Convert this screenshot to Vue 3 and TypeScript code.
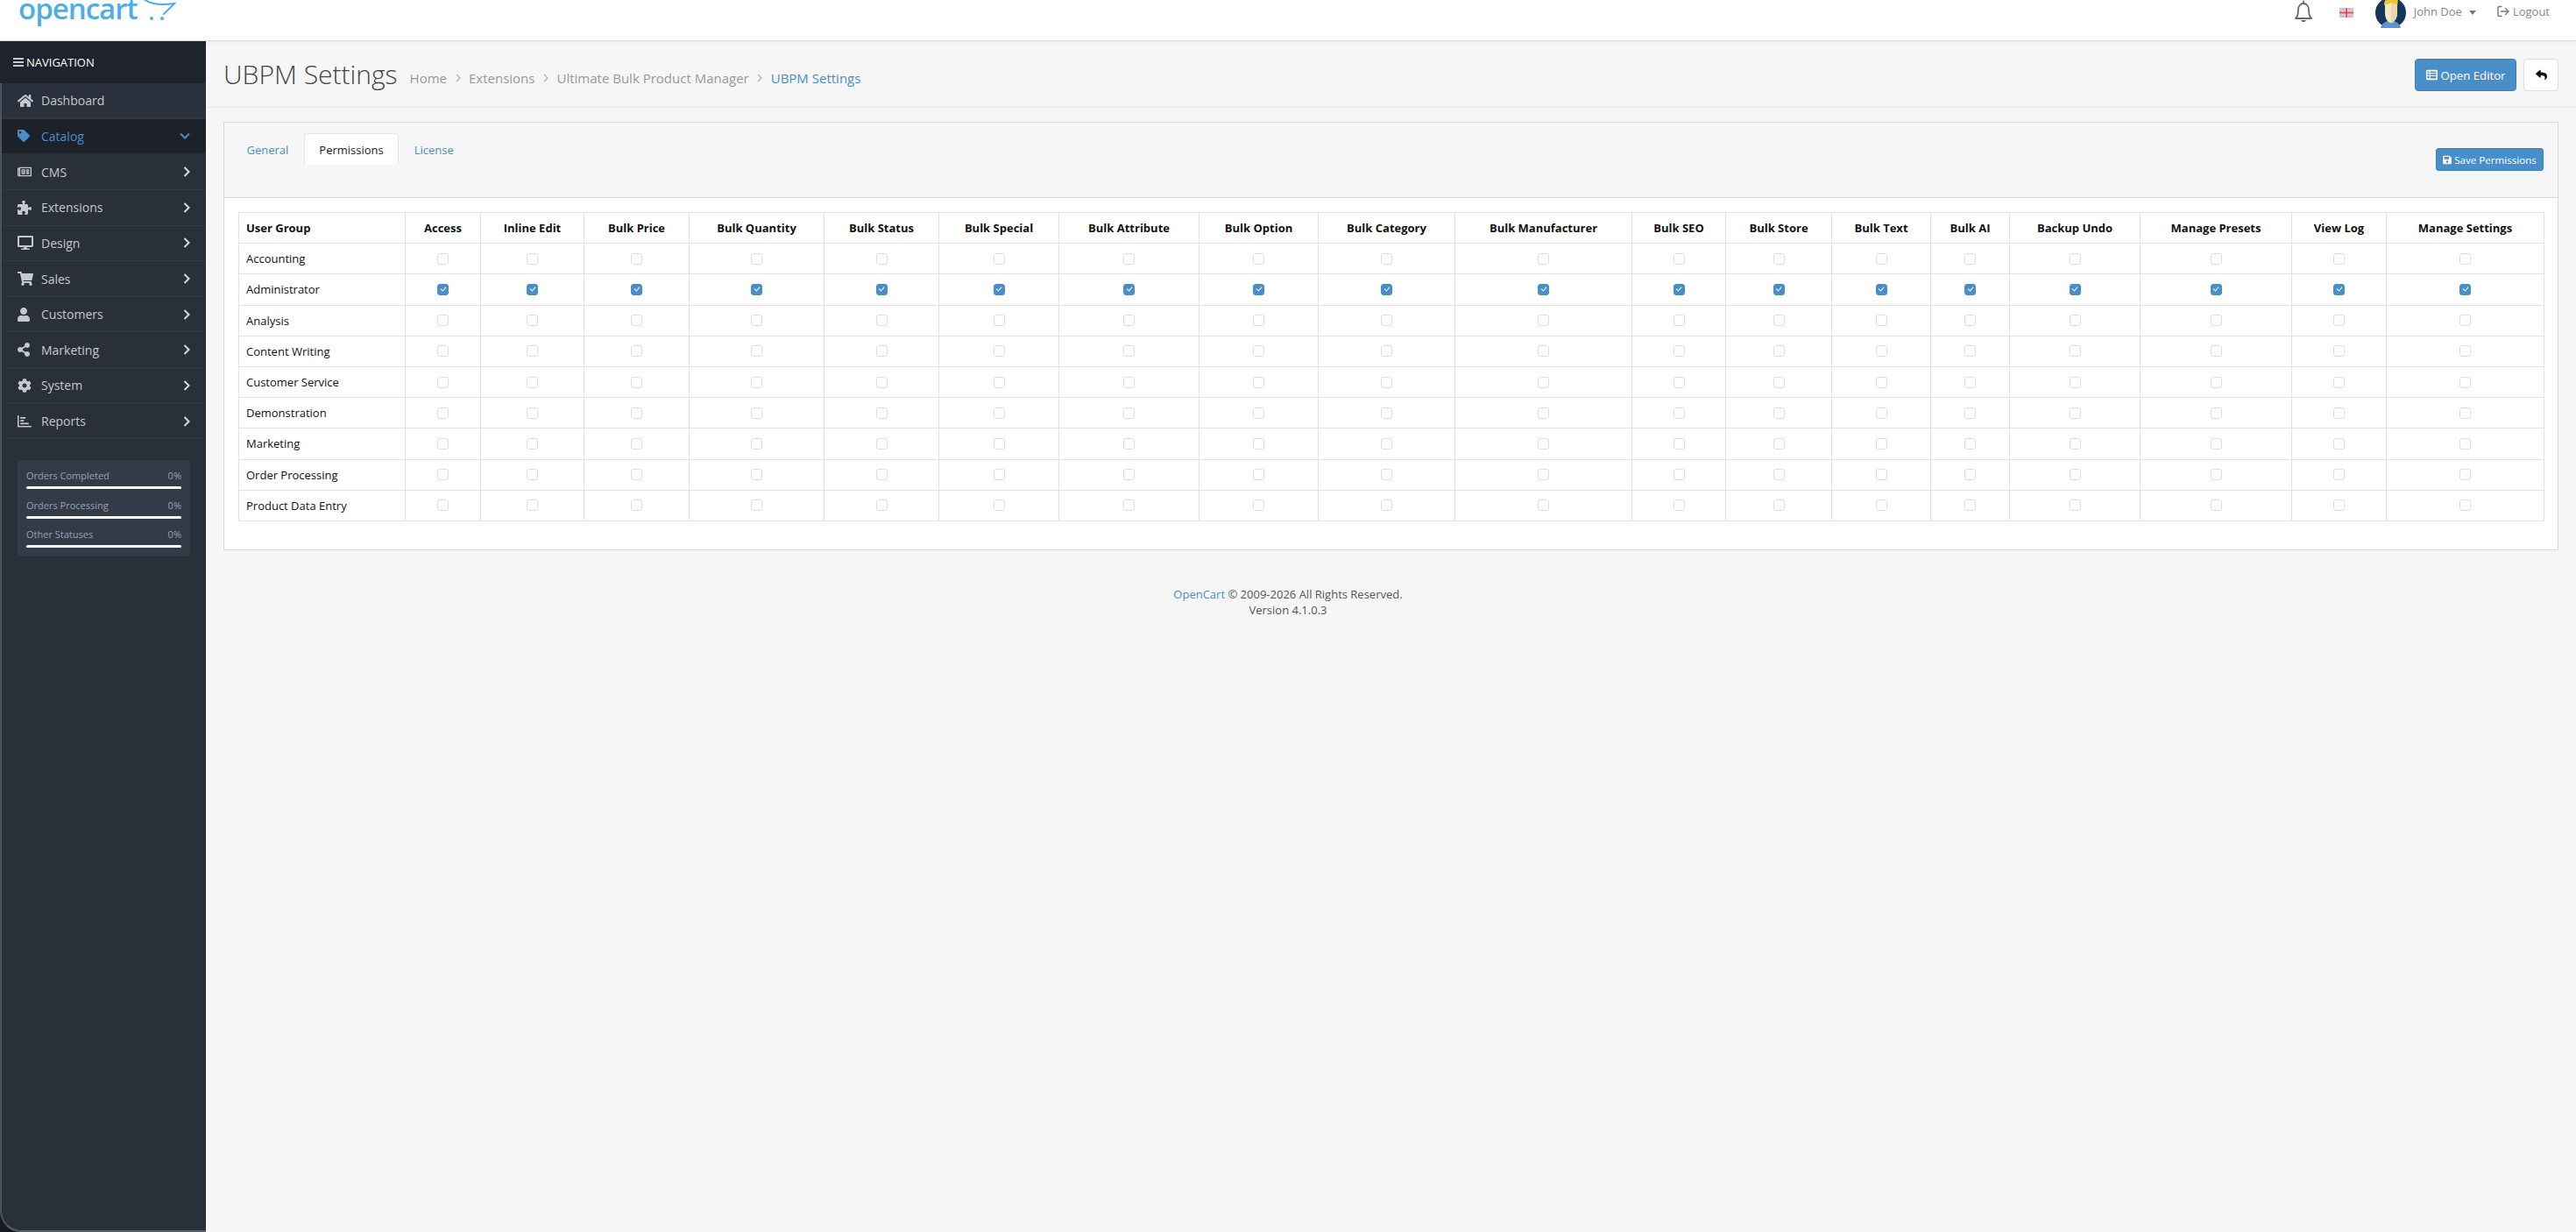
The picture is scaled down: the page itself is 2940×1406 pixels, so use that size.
<script setup lang="ts">
interface NavItem {
  label: string;
  vb: string;
  d: string;
  w: number;
  open?: boolean;
  sub?: boolean;
}

const navItems: NavItem[] = [
  { label: 'Dashboard', vb: '0 0 576 512', w: 18, d: 'M280.37 148.26L96 300.11V464a16 16 0 0 0 16 16l112.06-.29a16 16 0 0 0 15.92-16V368a16 16 0 0 1 16-16h64a16 16 0 0 1 16 16v95.64a16 16 0 0 0 16 16.05L464 480a16 16 0 0 0 16-16V300L295.67 148.26a12.19 12.19 0 0 0-15.3 0zM571.6 251.47L488 182.56V44.05a12 12 0 0 0-12-12h-56a12 12 0 0 0-12 12v72.61L318.47 43a48 48 0 0 0-61 0L4.34 251.47a12 12 0 0 0-1.6 16.9l25.5 31A12 12 0 0 0 45.15 301l235.22-193.74a12.19 12.19 0 0 1 15.3 0L530.9 301a12 12 0 0 0 16.9-1.6l25.5-31a12 12 0 0 0-1.7-16.93z' },
  { label: 'Catalog', vb: '0 0 512 512', w: 14, open: true, sub: true, d: 'M0 252.118V48C0 21.49 21.49 0 48 0h204.118a48 48 0 0 1 33.941 14.059l211.882 211.882c18.745 18.745 18.745 49.137 0 67.882L293.823 497.941c-18.745 18.745-49.137 18.745-67.882 0L14.059 286.059A48 48 0 0 1 0 252.118zM112 64c-26.51 0-48 21.49-48 48s21.49 48 48 48 48-21.49 48-48-21.49-48-48-48z' },
  { label: 'CMS', vb: '0 0 576 512', w: 16, sub: true, d: 'M552 64H112c-20.858 0-38.643 13.377-45.248 32H24c-13.255 0-24 10.745-24 24v272c0 30.928 25.072 56 56 56h496c13.255 0 24-10.745 24-24V88c0-13.255-10.745-24-24-24zM48 392V144h16v248c0 4.411-3.589 8-8 8s-8-3.589-8-8zm480 8H111.422c.374-2.614.578-5.283.578-8V112h416v288zM172 280h136c6.627 0 12-5.373 12-12v-96c0-6.627-5.373-12-12-12H172c-6.627 0-12 5.373-12 12v96c0 6.627 5.373 12 12 12zm28-80h80v40h-80v-40zm-40 140v-24c0-6.627 5.373-12 12-12h136c6.627 0 12 5.373 12 12v24c0 6.627-5.373 12-12 12H172c-6.627 0-12-5.373-12-12zm192 0v-24c0-6.627 5.373-12 12-12h104c6.627 0 12 5.373 12 12v24c0 6.627-5.373 12-12 12H364c-6.627 0-12-5.373-12-12zm0-144v-24c0-6.627 5.373-12 12-12h104c6.627 0 12 5.373 12 12v24c0 6.627-5.373 12-12 12H364c-6.627 0-12-5.373-12-12zm0 72v-24c0-6.627 5.373-12 12-12h104c6.627 0 12 5.373 12 12v24c0 6.627-5.373 12-12 12H364c-6.627 0-12-5.373-12-12z' },
  { label: 'Extensions', vb: '0 0 512 512', w: 16, sub: true, d: 'M192 104.8c0-9.2-5.8-17.3-13.2-22.8C167.2 73.3 160 61.3 160 48c0-26.5 28.7-48 64-48s64 21.5 64 48c0 13.3-7.2 25.3-18.8 34c-7.4 5.5-13.2 13.6-13.2 22.8c0 12.8 10.4 23.2 23.2 23.2H336c26.5 0 48 21.5 48 48v56.8c0 12.8 10.4 23.2 23.2 23.2c9.2 0 17.3-5.8 22.8-13.2c8.7-11.6 20.7-18.8 34-18.8c26.5 0 48 28.7 48 64s-21.5 64-48 64c-13.3 0-25.3-7.2-34-18.8c-5.5-7.4-13.6-13.2-22.8-13.2c-12.8 0-23.2 10.4-23.2 23.2V464c0 26.5-21.5 48-48 48H279.2c-12.8 0-23.2-10.4-23.2-23.2c0-9.2 5.8-17.3 13.2-22.8c11.6-8.7 18.8-20.7 18.8-34c0-26.5-28.7-48-64-48s-64 21.5-64 48c0 13.3 7.2 25.3 18.8 34c7.4 5.5 13.2 13.6 13.2 22.8c0 12.8-10.4 23.2-23.2 23.2H48c-26.5 0-48-21.5-48-48V343.2C0 330.4 10.4 320 23.2 320c9.2 0 17.3 5.8 22.8 13.2C54.7 344.8 66.7 352 80 352c26.5 0 48-28.7 48-64s-21.5-64-48-64c-13.3 0-25.3 7.2-34 18.8C40.5 250.2 32.4 256 23.2 256C10.4 256 0 245.6 0 232.8V176c0-26.5 21.5-48 48-48H168.8c12.8 0 23.2-10.4 23.2-23.2z' },
  { label: 'Design', vb: '0 0 576 512', w: 18, sub: true, d: 'M528 0H48C21.5 0 0 21.5 0 48v320c0 26.5 21.5 48 48 48h192l-16 48h-72c-13.3 0-24 10.7-24 24s10.7 24 24 24h272c13.3 0 24-10.7 24-24s-10.7-24-24-24h-72l-16-48h192c26.5 0 48-21.5 48-48V48c0-26.5-21.5-48-48-48zm-16 352H64V64h448v288z' },
  { label: 'Sales', vb: '0 0 576 512', w: 18, sub: true, d: 'M528.12 301.319l47.273-208C578.806 78.301 567.391 64 551.99 64H159.208l-9.166-44.81C147.758 8.021 137.93 0 126.529 0H24C10.745 0 0 10.745 0 24v16c0 13.255 10.745 24 24 24h69.883l70.248 343.435C147.325 417.1 136 435.222 136 456c0 30.928 25.072 56 56 56s56-25.072 56-56c0-15.674-6.447-29.835-16.824-40h209.647C430.447 426.165 424 440.326 424 456c0 30.928 25.072 56 56 56s56-25.072 56-56c0-22.172-12.888-41.332-31.579-50.405l5.517-24.276c3.413-15.018-8.002-29.319-23.403-29.319H218.117l-6.545-32h293.145c11.206 0 20.92-7.754 23.403-18.681z' },
  { label: 'Customers', vb: '0 0 448 512', w: 14, sub: true, d: 'M224 256c70.7 0 128-57.3 128-128S294.7 0 224 0 96 57.3 96 128s57.3 128 128 128zm89.6 32h-16.7c-22.2 10.2-46.9 16-72.9 16s-50.6-5.8-72.9-16h-16.7C60.2 288 0 348.2 0 422.4V464c0 26.5 21.5 48 48 48h352c26.5 0 48-21.5 48-48v-41.6c0-74.2-60.2-134.4-134.4-134.4z' },
  { label: 'Marketing', vb: '0 0 448 512', w: 14, sub: true, d: 'M352 320c-22.608 0-43.387 7.819-59.79 20.895l-102.486-64.054a96.551 96.551 0 0 0 0-41.683l102.486-64.054C308.613 184.181 329.392 192 352 192c53.019 0 96-42.981 96-96S405.019 0 352 0s-96 42.981-96 96c0 7.158.79 14.13 2.276 20.841L155.79 180.895C139.387 167.819 118.608 160 96 160c-53.019 0-96 42.981-96 96s42.981 96 96 96c22.608 0 43.387-7.819 59.79-20.895l102.486 64.054A96.301 96.301 0 0 0 256 416c0 53.019 42.981 96 96 96s96-42.981 96-96-42.981-96-96-96z' },
  { label: 'System', vb: '0 0 512 512', w: 16, sub: true, d: 'M487.4 315.7l-42.6-24.6c4.3-23.2 4.3-47 0-70.2l42.6-24.6c4.9-2.8 7.1-8.6 5.5-14-11.1-35.6-30-67.8-54.7-94.6-3.8-4.1-10-5.1-14.8-2.3L380.8 110c-17.9-15.4-38.5-27.3-60.8-35.1V25.8c0-5.6-3.9-10.5-9.4-11.7-36.7-8.2-74.3-7.8-109.2 0-5.5 1.2-9.4 6.1-9.4 11.7V75c-22.2 7.9-42.8 19.8-60.8 35.1L88.7 85.5c-4.9-2.8-11-1.9-14.8 2.3-24.7 26.7-43.6 58.9-54.7 94.6-1.7 5.4.6 11.2 5.5 14L67.3 221c-4.3 23.2-4.3 47 0 70.2l-42.6 24.6c-4.9 2.8-7.1 8.6-5.5 14 11.1 35.6 30 67.8 54.7 94.6 3.8 4.1 10 5.1 14.8 2.3l42.6-24.6c17.9 15.4 38.5 27.3 60.8 35.1v49.2c0 5.6 3.9 10.5 9.4 11.7 36.7 8.2 74.3 7.8 109.2 0 5.5-1.2 9.4-6.1 9.4-11.7v-49.2c22.2-7.9 42.8-19.8 60.8-35.1l42.6 24.6c4.9 2.8 11 1.9 14.8-2.3 24.7-26.7 43.6-58.9 54.7-94.6 1.5-5.5-.7-11.3-5.6-14.1zM256 336c-44.1 0-80-35.9-80-80s35.9-80 80-80 80 35.9 80 80-35.9 80-80 80z' },
  { label: 'Reports', vb: '0 0 512 512', w: 16, sub: true, d: 'M48 416h448c9 0 16 7 16 16v16c0 9-7 16-16 16H32c-18 0-32-14-32-32V48c0-9 7-16 16-16h16c9 0 16 7 16 16zM112 96h176c6 0 10 4 10 10v36c0 6-4 10-10 10H112c-6 0-10-4-10-10v-36c0-6 4-10 10-10zM112 200h110c6 0 10 4 10 10v36c0 6-4 10-10 10H112c-6 0-10-4-10-10v-36c0-6 4-10 10-10zM112 304h290c6 0 10 4 10 10v36c0 6-4 10-10 10H112c-6 0-10-4-10-10v-36c0-6 4-10 10-10z' },
];

const stats = ['Orders Completed', 'Orders Processing', 'Other Statuses'];

const columns = [
  { label: 'Access', w: 86 },
  { label: 'Inline Edit', w: 118 },
  { label: 'Bulk Price', w: 120 },
  { label: 'Bulk Quantity', w: 154 },
  { label: 'Bulk Status', w: 131 },
  { label: 'Bulk Special', w: 137 },
  { label: 'Bulk Attribute', w: 160 },
  { label: 'Bulk Option', w: 136 },
  { label: 'Bulk Category', w: 156 },
  { label: 'Bulk Manufacturer', w: 202 },
  { label: 'Bulk SEO', w: 107 },
  { label: 'Bulk Store', w: 121 },
  { label: 'Bulk Text', w: 113 },
  { label: 'Bulk AI', w: 90 },
  { label: 'Backup Undo', w: 149 },
  { label: 'Manage Presets', w: 173 },
  { label: 'View Log', w: 108 },
  { label: 'Manage Settings', w: 180 },
];

const groups = [
  'Accounting',
  'Administrator',
  'Analysis',
  'Content Writing',
  'Customer Service',
  'Demonstration',
  'Marketing',
  'Order Processing',
  'Product Data Entry',
];

const crumbs = ['Home', 'Extensions', 'Ultimate Bulk Product Manager'];
</script>

<template>
  <div class="page">
    <header class="topbar">
      <div class="logo">
        <span class="logo-text">opencart</span>
        <svg class="logo-cart" viewBox="0 0 40 24" width="40" height="24">
          <path d="M3 -1C11 5 25 6 38 4C34 8 30 12 26 16" fill="none" stroke="#4fade6" stroke-width="2" stroke-linecap="round" />
          <circle cx="12" cy="21" r="2" fill="#4fade6" />
          <circle cx="24" cy="21" r="2" fill="#4fade6" />
        </svg>
      </div>
      <div class="top-right">
        <svg class="bell" viewBox="0 0 22 26" width="22" height="26">
          <path d="M11 1.5V4M3.5 19C5 16.5 5 14 5 11C5 7 7.5 4 11 4C14.5 4 17 7 17 11C17 14 17 16.5 18.5 19C19.5 20 20 20.2 20 21H2C2 20.2 2.5 20 3.5 19Z" fill="none" stroke="#6b6b6b" stroke-width="1.8" stroke-linejoin="round" stroke-linecap="round" />
          <path d="M8 23H14C13.6 24.6 12.4 25 11 25C9.6 25 8.4 24.6 8 23Z" fill="#6b6b6b" />
        </svg>
        <svg class="flag" viewBox="0 0 16 11" width="16" height="11">
          <rect width="16" height="11" fill="#b9b6d6" />
          <path d="M0 0L16 11M16 0L0 11" stroke="#f3dfe6" stroke-width="2" />
          <path d="M0 0L16 11M16 0L0 11" stroke="#d8708a" stroke-width="0.6" />
          <path d="M8 0V11M0 5.5H16" stroke="#f6e6ea" stroke-width="3.4" />
          <path d="M8 0V11M0 5.5H16" stroke="#dc4c5c" stroke-width="1.8" />
        </svg>
        <svg class="avatar" viewBox="0 0 35 35" width="35" height="35">
          <circle cx="17.5" cy="17.5" r="17.5" fill="#17375a" />
          <path d="M6 35C7 30 11 28 14 27H21C24 28 28 30 29 35Z" fill="#5b93d3" />
          <path d="M11 5H25V18C25 24 21 29 18 29C14 29 11 24 11 18Z" fill="#f7e6c6" />
          <path d="M18 5H25V18C25 24 21 29 18 29Z" fill="#eed5ac" />
          <path d="M10 9C10 3 13 0 18 0H24C26 2 26 6 25 9C22 6 16 6 14 8C12 8 11 9 10 9Z" fill="#efc52f" />
        </svg>
        <span class="user">John Doe</span>
        <span class="caret"></span>
        <svg class="logout-icon" viewBox="0 0 14 14" width="14" height="14">
          <path d="M5 1.5H2.5C1.6 1.5 1 2.1 1 3V11C1 11.9 1.6 12.5 2.5 12.5H5" fill="none" stroke="#777" stroke-width="1.4" stroke-linecap="round" />
          <path d="M4.5 7H13M9.5 3.5L13 7L9.5 10.5" fill="none" stroke="#777" stroke-width="1.4" stroke-linecap="round" stroke-linejoin="round" />
        </svg>
        <span class="logout">Logout</span>
      </div>
    </header>

    <div class="layout">
      <aside class="sidebar">
        <div class="sidebar-inner">
          <div class="nav-title">
            <svg viewBox="0 0 12 10" width="12" height="10">
              <path d="M0 1H12M0 5H12M0 9H12" stroke="#fff" stroke-width="1.4" />
            </svg>
            <span>NAVIGATION</span>
          </div>
          <nav>
            <a v-for="item in navItems" :key="item.label" class="nav-item" :class="{ open: item.open }">
              <span class="nav-icon">
                <svg :viewBox="item.vb" :width="item.w" :height="16"><path :d="item.d" fill="currentColor" /></svg>
              </span>
              <span class="nav-label">{{ item.label }}</span>
              <svg v-if="item.sub && item.open" class="chev" viewBox="0 0 12 8" width="12" height="8">
                <path d="M1 1.5L6 6.5L11 1.5" fill="none" stroke="currentColor" stroke-width="2" />
              </svg>
              <svg v-else-if="item.sub" class="chev" viewBox="0 0 8 12" width="8" height="12">
                <path d="M1.5 1L6.5 6L1.5 11" fill="none" stroke="currentColor" stroke-width="2" />
              </svg>
            </a>
          </nav>
          <div class="stats">
            <div v-for="s in stats" :key="s" class="stat">
              <div class="stat-row">
                <span>{{ s }}</span>
                <span>0%</span>
              </div>
              <div class="stat-bar"></div>
            </div>
          </div>
        </div>
      </aside>

      <main class="content">
        <div class="page-header">
          <h1>UBPM Settings</h1>
          <ol class="breadcrumb">
            <li v-for="c in crumbs" :key="c">
              <span>{{ c }}</span>
              <svg viewBox="0 0 6 10" width="6" height="10"><path d="M1 1L5 5L1 9" fill="none" stroke="#aaa" stroke-width="1.1" /></svg>
            </li>
            <li class="current">UBPM Settings</li>
          </ol>
          <div class="actions">
            <button class="btn btn-primary">
              <svg viewBox="0 0 512 512" width="13" height="13">
                <path fill="#fff" fill-rule="evenodd" d="M48 32h416a48 48 0 0 1 48 48v352a48 48 0 0 1-48 48H48a48 48 0 0 1-48-48V80a48 48 0 0 1 48-48zM56 96v70h90V96zM186 96v70h270V96zM56 206v70h90v-70zM186 206v70h270v-70zM56 316v100h90V316zM186 316v100h270V316z" />
              </svg>
              Open Editor
            </button>
            <button class="btn btn-back">
              <svg viewBox="0 0 512 512" width="13" height="13">
                <path fill="#111" d="M8.309 189.836L184.313 37.851C199.719 24.546 224 35.347 224 56.015v80.053c160.629 1.839 288 34.032 288 186.258 0 61.441-39.581 122.309-83.333 154.132-13.653 9.931-33.111-2.533-28.077-18.631 45.344-145.012-21.507-183.51-176.59-185.742V360c0 20.7-24.3 31.453-39.687 18.164l-176.004-152c-11.071-9.562-11.086-26.753 0-36.328z" />
              </svg>
            </button>
          </div>
        </div>

        <section class="card">
          <div class="card-header">
            <ul class="tabs">
              <li><a>General</a></li>
              <li class="active"><a>Permissions</a></li>
              <li><a>License</a></li>
            </ul>
            <button class="btn-save">
              <svg viewBox="0 0 448 512" width="10" height="11">
                <path fill="#fff" d="M433.941 129.941l-83.882-83.882A48 48 0 0 0 316.118 32H48C21.49 32 0 53.49 0 80v352c0 26.51 21.49 48 48 48h352c26.51 0 48-21.49 48-48V163.882a48 48 0 0 0-14.059-33.941zM224 416c-35.346 0-64-28.654-64-64 0-35.346 28.654-64 64-64s64 28.654 64 64c0 35.346-28.654 64-64 64zm96-304.52V212c0 6.627-5.373 12-12 12H76c-6.627 0-12-5.373-12-12V108c0-6.627 5.373-12 12-12h228.52c3.183 0 6.235 1.264 8.485 3.515l3.48 3.48A11.996 11.996 0 0 1 320 111.48z" />
              </svg>
              Save Permissions
            </button>
          </div>
          <div class="card-body">
            <table class="perm-table">
              <colgroup>
                <col :style="{ width: '190px' }" />
                <col v-for="c in columns" :key="c.label" :style="{ width: c.w + 'px' }" />
              </colgroup>
              <thead>
                <tr>
                  <th class="group-col">User Group</th>
                  <th v-for="c in columns" :key="c.label">{{ c.label }}</th>
                </tr>
              </thead>
              <tbody>
                <tr v-for="g in groups" :key="g">
                  <td class="group-col">{{ g }}</td>
                  <td v-for="c in columns" :key="c.label">
                    <input type="checkbox" class="check" :checked="g === 'Administrator'" />
                  </td>
                </tr>
              </tbody>
            </table>
          </div>
        </section>

        <footer class="footer">
          <div><a>OpenCart</a> &copy; 2009-2026 All Rights Reserved.</div>
          <div>Version 4.1.0.3</div>
        </footer>
      </main>
    </div>
  </div>
</template>

<style>
html,
body {
  margin: 0;
  overflow: hidden;
}
</style>

<style scoped>
.page {
  height: 100vh;
  display: flex;
  flex-direction: column;
  font-family: 'Open Sans', 'Liberation Sans', sans-serif;
  font-size: 13px;
  color: #222;
  background: #f6f6f6;
}

/* top bar */
.topbar {
  height: 46px;
  flex: none;
  display: flex;
  justify-content: space-between;
  background: #fff;
  border-bottom: 1px solid #dcdcdc;
  box-shadow: 0 1px 3px rgba(0, 0, 0, 0.06);
  position: relative;
  z-index: 2;
}
.logo {
  display: flex;
  padding-left: 21px;
  height: 46px;
}
.logo-text {
  font-family: 'Open Sans', sans-serif;
  font-weight: 600;
  font-size: 33px;
  line-height: 20px;
  letter-spacing: -1px;
  color: #4fade6;
}
.logo-cart {
  margin-left: 4px;
}
.top-right {
  display: flex;
  align-items: flex-start;
  padding-right: 30px;
  color: #888;
}
.flag {
  margin: 9px 0 0 30px;
}
.avatar {
  margin: -3px 0 0 25px;
}
.user {
  margin: 4px 0 0 9px;
  font-size: 13px;
}
.caret {
  margin: 12px 0 0 8px;
  border: 4px solid transparent;
  border-top: 5px solid #777;
  border-bottom: 0;
}
.logout-icon {
  margin: 6px 0 0 24px;
}
.logout {
  margin: 4px 0 0 4px;
  font-size: 13px;
}

/* sidebar */
.layout {
  flex: 1;
  display: flex;
  min-height: 0;
}
.sidebar {
  width: 235px;
  flex: none;
  background: #16191e;
  display: flex;
}
.sidebar-inner {
  flex: 1;
  box-sizing: border-box;
  background: #2a303a;
  border-left: 2px solid #4d535c;
  border-bottom: 2px solid #5b6068;
  border-bottom-left-radius: 24px;
}
.nav-title {
  height: 48px;
  margin-left: -2px;
  padding-left: 15px;
  display: flex;
  align-items: center;
  gap: 3px;
  background: #1e232d;
  color: #fff;
  font-size: 13px;
}
.nav-item {
  height: 40.65px;
  box-sizing: border-box;
  display: flex;
  align-items: center;
  padding: 0 18px 0 18px;
  color: #c5c8cc;
  font-size: 14px;
  border-bottom: 1px solid #323845;
}
.nav-item:first-child {
  background: #2b313c;
}
.nav-item.open {
  background: #1d2129;
  color: #4a8ec9;
  border-bottom-color: #2a303a;
}
.nav-icon {
  width: 27px;
  display: flex;
}
.nav-label {
  flex: 1;
}
.chev {
  color: #d8dadd;
}
.nav-item.open .chev {
  color: #4a8ec9;
}
.stats {
  margin: 24px 18px 0 18px;
  padding: 9px 10px 10px;
  background: #333b48;
  border-radius: 2px;
}
.stat-row {
  display: flex;
  justify-content: space-between;
  font-size: 11px;
  line-height: 18px;
  color: #9aa1ab;
}
.stat-bar {
  height: 3px;
  margin: 3px 0 9.5px;
  background: #fff;
  border-radius: 2px;
}
.stat:last-child .stat-bar {
  margin-bottom: 0;
}

/* main */
.content {
  flex: 1;
  min-width: 0;
  display: flex;
  flex-direction: column;
}
.page-header {
  height: 76px;
  box-sizing: border-box;
  display: flex;
  align-items: center;
  padding: 0 20px 0 20px;
  border-bottom: 1px solid #e9e9e9;
}
h1 {
  margin: 0;
  font-size: 30px;
  font-weight: 300;
  color: #444;
  line-height: 1;
}
.breadcrumb {
  display: flex;
  align-items: center;
  list-style: none;
  margin: 8px 0 0 14px;
  padding: 0;
  color: #999;
  font-size: 15px;
}
.breadcrumb li {
  display: flex;
  align-items: center;
}
.breadcrumb svg {
  margin: 0 9.5px;
}
.breadcrumb .current {
  color: #4a8ec9;
}
.actions {
  margin: 2px 0 0 auto;
  display: flex;
  gap: 8px;
}
.btn {
  height: 37px;
  box-sizing: border-box;
  border-radius: 4px;
  font: inherit;
  font-size: 13.2px;
  display: flex;
  align-items: center;
  justify-content: center;
}
.btn-primary {
  width: 116px;
  gap: 4px;
  background: #4a8ec9;
  border: 1px solid #3f80b9;
  color: #fff;
}
.btn-back {
  width: 40px;
  background: #fff;
  border: 1px solid #ddd;
}

/* card */
.card {
  margin: 16px 20px 0 20px;
  border: 1px solid #d8d8d8;
  background: #fff;
}
.card-header {
  height: 86px;
  box-sizing: border-box;
  display: flex;
  justify-content: space-between;
  align-items: flex-start;
  padding: 12px 16px 0 8px;
  background: #f6f6f6;
  border-bottom: 1px solid #d8d8d8;
}
.tabs {
  display: flex;
  list-style: none;
  margin: 0;
  padding: 0;
  font-size: 13px;
}
.tabs li {
  height: 36px;
  box-sizing: border-box;
  padding: 0 16.5px;
  display: flex;
  align-items: center;
  color: #4a8ec9;
  border: 1px solid transparent;
  border-bottom: 0;
}
.tabs li.active {
  background: #fff;
  color: #222;
  border-color: #e6e6e6;
  border-radius: 4px 4px 0 0;
}
.btn-save {
  margin-top: 17px;
  height: 26px;
  width: 123px;
  display: flex;
  align-items: center;
  justify-content: center;
  gap: 3px;
  padding: 0;
  font: inherit;
  font-size: 11.6px;
  color: #fff;
  background: #4a8ec9;
  border: 1px solid #3f80b9;
  border-radius: 3px;
}
.card-body {
  padding: 16px 16px 32px;
}
.perm-table {
  width: 2631px;
  table-layout: fixed;
  border-collapse: collapse;
}
.perm-table th,
.perm-table td {
  height: 35.2px;
  padding: 0;
  box-sizing: border-box;
  border: 1px solid #e2e2e2;
  text-align: center;
  vertical-align: middle;
  font-size: 13px;
  color: #111;
}
.perm-table th {
  font-weight: 700;
}
.perm-table .group-col {
  text-align: left;
  padding-left: 8px;
}
.check {
  appearance: none;
  display: block;
  position: relative;
  width: 13px;
  height: 13px;
  margin: 0 auto;
  border: 1px solid #dedede;
  border-radius: 3px;
  background: #fff;
  box-sizing: border-box;
}
.check:checked {
  background: #4a8ec9;
  border-color: #4a8ec9;
}
.check:checked::after {
  content: '';
  position: absolute;
  left: 3.5px;
  top: 1.5px;
  width: 3px;
  height: 5px;
  border: solid #fff;
  border-width: 0 1.5px 1.5px 0;
  transform: rotate(40deg);
}
.footer {
  margin-top: 41px;
  padding-right: 235px;
  text-align: center;
  line-height: 18px;
  font-size: 13px;
  color: #555;
}
.footer a {
  color: #4a8ec9;
}
</style>
